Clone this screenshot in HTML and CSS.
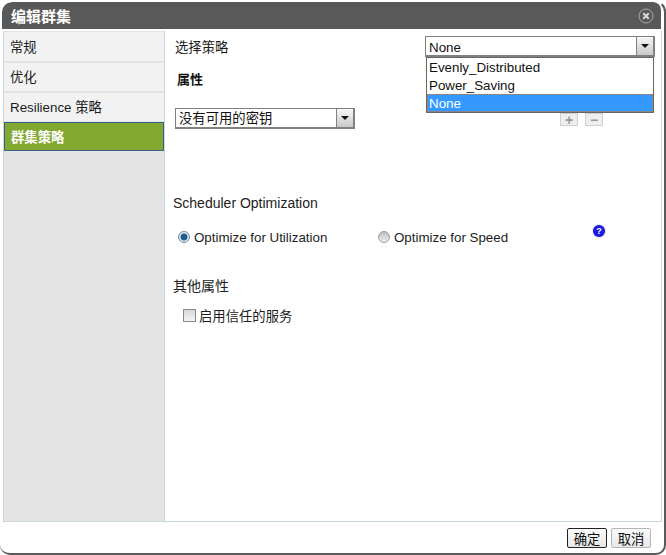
FILE: index.html
```html
<!DOCTYPE html>
<html lang="zh">

<head>
  <meta charset="UTF-8">
  <title>编辑群集</title>
  <link rel="stylesheet" href="styles.css">
</head>

<body>
  <div class="dialog">
    <div class="dialog-header">
      <span class="dialog-title">编辑群集</span>
      <svg class="btn-close" width="16" height="16" viewBox="0 0 16 16">
        <circle cx="8" cy="8" r="7" fill="none" stroke="#a8a8a8" stroke-width="1"/>
        <path d="M5.2 5.2l5.6 5.6M10.8 5.2l-5.6 5.6" stroke="#d8d8d8" stroke-width="2"/>
      </svg>
    </div>

    <div class="dialog-body">
      <ul class="side-tabs">
        <li class="side-tab">常规</li>
        <li class="side-tab">优化</li>
        <li class="side-tab">Resilience 策略</li>
        <li class="side-tab side-tab-active">群集策略</li>
      </ul>

      <div class="panel">
        <div class="policy-row">
          <span class="policy-label">选择策略</span>
          <div class="policy-select">
            <div class="select select-wide">
              <span class="select-value">None</span>
              <span class="select-arrow"></span>
            </div>
            <ul class="select-menu">
              <li class="select-option">Evenly_Distributed</li>
              <li class="select-option">Power_Saving</li>
              <li class="select-option select-option-active">None</li>
            </ul>
          </div>
        </div>

        <h3 class="props-title">属性</h3>

        <div class="props-row">
          <div class="select select-key">
            <span class="select-value">没有可用的密钥</span>
            <span class="select-arrow"></span>
          </div>
          <div class="props-buttons">
            <button class="btn-small" type="button">+</button>
            <button class="btn-small" type="button">−</button>
          </div>
        </div>

        <h4 class="section-title section-scheduler">Scheduler Optimization</h4>
        <div class="radio-row">
          <label class="radio-item radio-util"><span class="radio radio-on"></span>Optimize for Utilization</label>
          <label class="radio-item radio-speed"><span class="radio"></span>Optimize for Speed</label>
          <span class="help-icon">?</span>
        </div>

        <h4 class="section-title section-other">其他属性</h4>
        <label class="check-item"><span class="checkbox"></span>启用信任的服务</label>
      </div>
    </div>

    <div class="dialog-footer">
      <button class="btn btn-default" type="button">确定</button>
      <button class="btn" type="button">取消</button>
    </div>
  </div>
</body>

</html>
```

FILE: styles.css
```css
html, body {
  margin: 0;
  padding: 0;
  height: 100%;
  background-color: white;
}

body {
  font-family: "Liberation Sans", "Noto Sans CJK SC", sans-serif;
  font-size: 13.33px;
  color: #1c1c1c;
}

ul {
  list-style: none;
  margin: 0;
  padding: 0;
}

h3, h4 {
  margin: 0;
}

.dialog {
  box-sizing: border-box;
  width: 666px;
  height: 555px;
  display: flex;
  flex-direction: column;
  border-top: 2px solid white;
  border-right: 2px solid #595959;
  border-bottom: 2px solid #595959;
  border-radius: 12px 12px 10px 10px;
  overflow: hidden;
}

.dialog-header {
  height: 27px;
  margin: 0 3px 0 2px;
  padding: 0 7px 0 9px;
  display: flex;
  align-items: center;
  justify-content: space-between;
  background-color: #595959;
  border-radius: 10px 8px 0 0;
}

.dialog-title {
  color: white;
  font-size: 15px;
  font-weight: bold;
}

.dialog-body {
  flex: 1;
  margin: 2px 2px 0 3px;
  display: flex;
  border: 1px solid #c9d6de;
  border-top: none;
}

.side-tabs {
  width: 160px;
  padding-top: 1px;
  background-color: #e4e4e4;
  border-right: 1px solid #c9d6de;
}

.side-tab {
  box-sizing: border-box;
  height: 28px;
  margin-bottom: 2px;
  padding: 0 6px;
  line-height: 29px;
  background-color: #f2f2f2;
}

.side-tab:first-child {
  height: 29px;
  line-height: 31px;
}

.side-tab-active {
  height: 29px;
  margin-top: -1px;
  line-height: 29px;
  color: white;
  font-weight: bold;
  background-color: #82a82f;
  border: 1px solid #36608a;
}

.panel {
  flex: 1;
  padding: 0 6px 0 8px;
  background-color: white;
}

.policy-row {
  height: 27px;
  display: flex;
  justify-content: space-between;
  padding-left: 2px;
  align-items: flex-start;
}

.policy-label {
  margin-top: 6px;
}

.policy-select {
  position: relative;
  margin-top: 5px;
}

.select {
  box-sizing: border-box;
  height: 21px;
  display: flex;
  justify-content: space-between;
  background-color: white;
  border: 2px solid #808080;
  border-top-width: 1px;
  border-left-width: 1px;
}

.select-wide {
  width: 230px;
}

.select-wide .select-value {
  line-height: 21px;
}

.select-key {
  width: 180px;
}

.select-value {
  padding-left: 3px;
  line-height: 20px;
  color: #111111;
}

.select-arrow {
  width: 16px;
  position: relative;
  background: linear-gradient(#f8f8f8, #c8c8c8);
  border-left: 1px solid #808080;
}

.select-arrow::after {
  content: "";
  position: absolute;
  left: 4px;
  top: 7px;
  border-top: 4px solid #111111;
  border-left: 4px solid transparent;
  border-right: 4px solid transparent;
}

.select-menu {
  position: absolute;
  top: 21px;
  left: 1px;
  width: 228px;
  box-sizing: border-box;
  background-color: white;
  border: 1px solid #666666;
}

.select-option {
  box-sizing: border-box;
  height: 18px;
  line-height: 20px;
  padding-left: 2px;
  color: #111111;
}

.select-option-active {
  padding-left: 1px;
  line-height: 18px;
  color: white;
  background-color: #3399ff;
  border: 1px dotted #e0701a;
}

.props-title {
  margin: 11px 0 0 4px;
  font-size: 13px;
  color: #111111;
}

.props-row {
  margin-top: 20px;
  padding-left: 2px;
  display: flex;
  justify-content: space-between;
}

.props-buttons {
  display: flex;
  gap: 7px;
  margin-right: 52px;
  margin-top: 5px;
}

.btn-small {
  box-sizing: border-box;
  width: 18px;
  height: 13px;
  padding: 0;
  font-family: "Liberation Sans", sans-serif;
  font-size: 14px;
  font-weight: bold;
  line-height: 10px;
  color: #999999;
  background-color: #eeeeee;
  border: 1px solid #d0d0d0;
}

.section-title {
  font-size: 14px;
  font-weight: normal;
  color: #222222;
}

.section-scheduler {
  margin-top: 66px;
}

.radio-row {
  position: relative;
  margin-top: 18px;
  height: 16px;
  display: flex;
  align-items: center;
}

.radio-item {
  display: flex;
  align-items: center;
  gap: 4px;
}

.radio-util {
  margin-left: 5px;
  width: 200px;
}

.radio {
  box-sizing: border-box;
  width: 12px;
  height: 12px;
  border-radius: 50%;
  background: linear-gradient(#bcbcbc, #f0f0f0);
  border: 1px solid #9a9a9a;
}

.radio-on {
  background: radial-gradient(circle, #1f5f90 0 3px, #dfe7ee 4px);
  border-color: #7d8a94;
}

.help-icon {
  position: absolute;
  left: 420px;
  top: -4px;
  width: 12px;
  height: 12px;
  border-radius: 50%;
  color: white;
  font-size: 9px;
  font-weight: bold;
  line-height: 12px;
  text-align: center;
  background-color: #1a1ae0;
  box-shadow: 0 0 2px #9a9ad0;
}

.section-other {
  margin-top: 30px;
}

.check-item {
  margin: 11px 0 0 10px;
  display: flex;
  align-items: center;
  gap: 3px;
}

.checkbox {
  box-sizing: border-box;
  width: 13px;
  height: 13px;
  background: linear-gradient(#d8d8d8, #f4f4f4);
  border: 1px solid #8a8a8a;
}

.dialog-footer {
  height: 31px;
  padding-right: 13px;
  display: flex;
  justify-content: flex-end;
  align-items: flex-start;
  gap: 4px;
}

.btn {
  box-sizing: border-box;
  width: 40px;
  height: 20px;
  margin-top: 6px;
  padding: 0;
  font-family: "Liberation Sans", "Noto Sans CJK SC", sans-serif;
  font-size: 13.33px;
  color: #111111;
  background: linear-gradient(#fafafa, #e8e8e8);
  border: 1px solid #b5b5b5;
  border-radius: 2px;
}

.btn-default {
  border-color: #222222;
}
```
